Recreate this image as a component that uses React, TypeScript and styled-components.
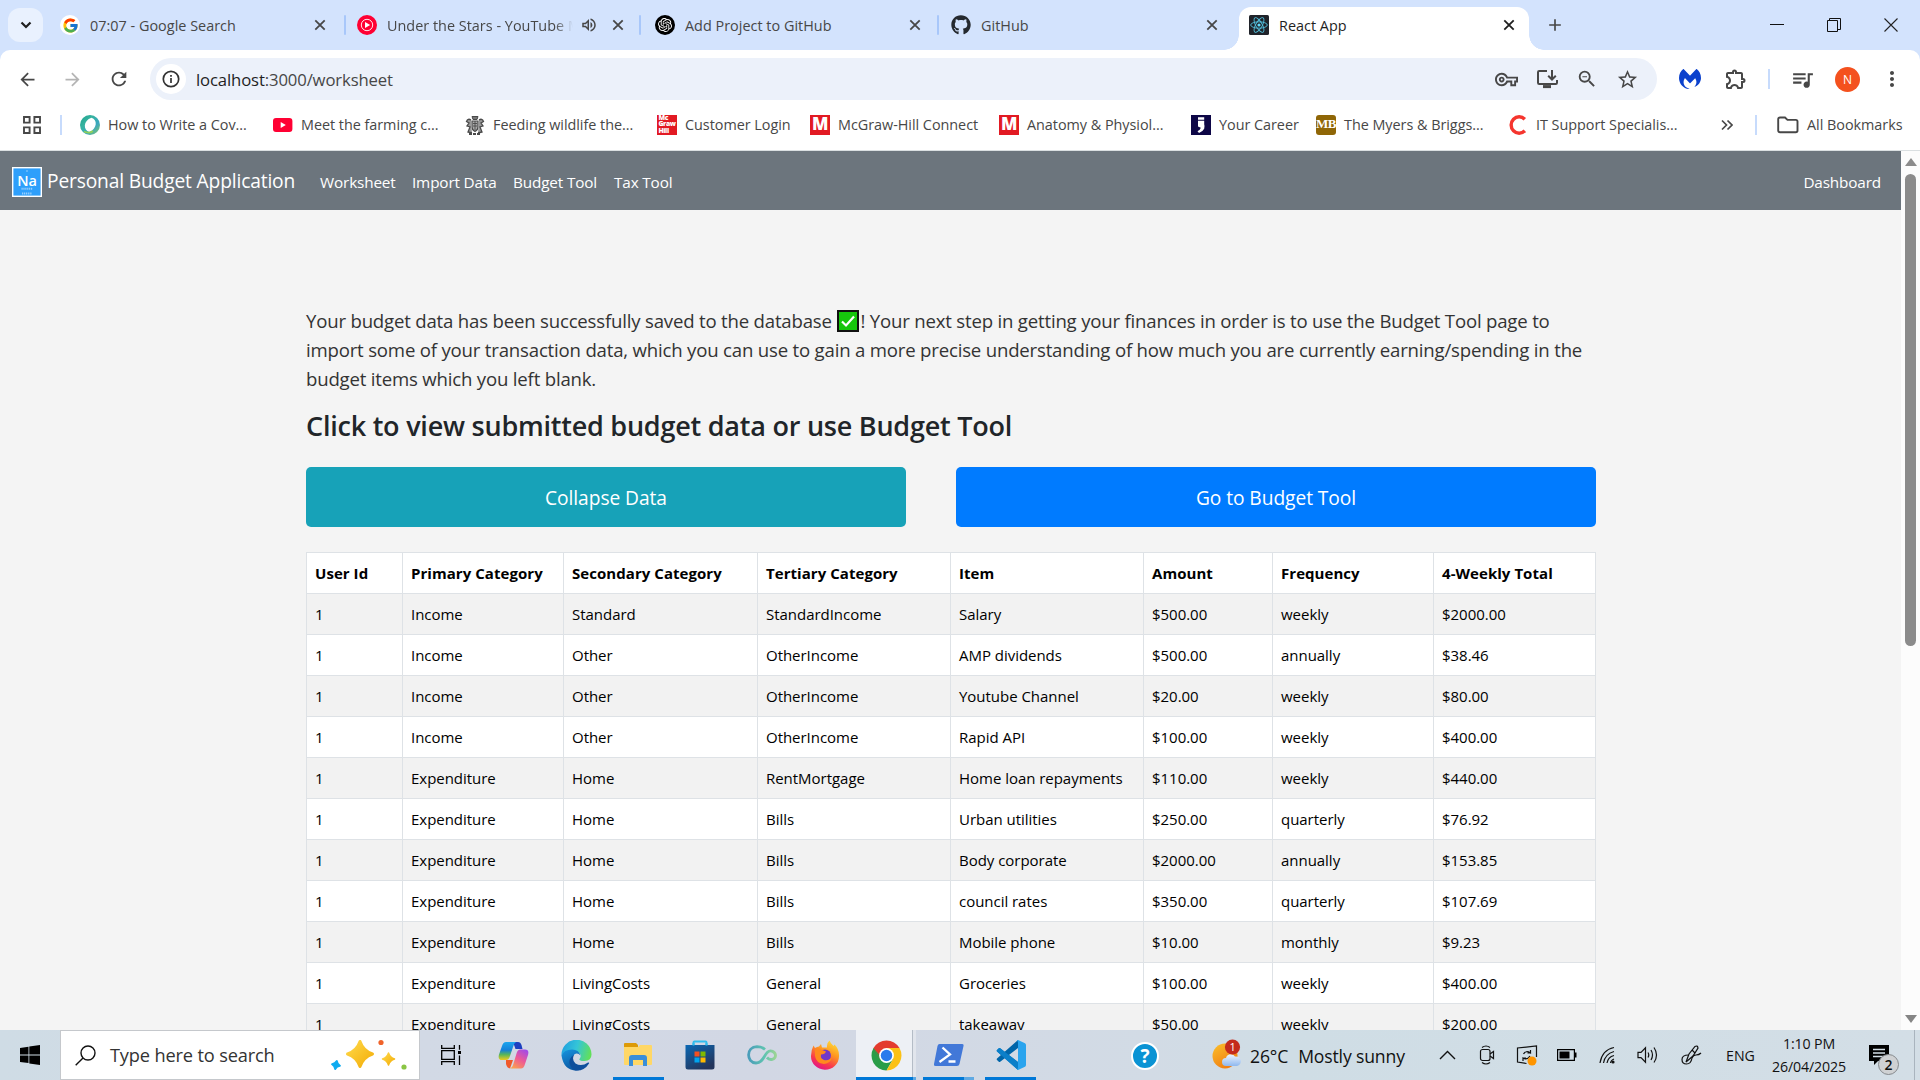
import React from "react";
import styled, { createGlobalStyle } from "styled-components";
import { FcGoogle } from "react-icons/fc";
import { FaGithub } from "react-icons/fa";
import { SiOpenai, SiMalwarebytes } from "react-icons/si";
import {
  MdAdd,
  MdArrowBack,
  MdArrowForward,
  MdRefresh,
  MdOutlineVolumeUp,
  MdOutlineVpnKey,
  MdStarOutline,
  MdZoomOut,
  MdOutlineExtension,
  MdQueueMusic,
  MdMoreVert,
} from "react-icons/md";

const Global = createGlobalStyle`
  *, *::before, *::after { box-sizing: border-box; }
  body {
    margin: 0;
    overflow: hidden;
    font-family: "Open Sans", "Noto Sans", sans-serif;
    color: #212529;
  }
  svg { display: block; flex: none; }
`;

const Screen = styled.div`
  display: flex;
  flex-direction: column;
  width: 1920px;
  height: 1080px;
  overflow: hidden;
  background: #fff;
`;

/* ---------- tab strip ---------- */

const TabStrip = styled.div`
  display: flex;
  flex: none;
  height: 50px;
  background: #d3e3fd;
  padding-left: 8px;
`;

const TabSearch = styled.div`
  display: flex;
  align-items: center;
  justify-content: center;
  flex: none;
  width: 35px;
  height: 34px;
  margin-top: 8px;
  border-radius: 12px;
  background: #e9f1fe;
`;

const Tab = styled.div<{ $width: number; $pad: number; $end?: number; $active?: boolean }>`
  position: relative;
  display: flex;
  align-items: center;
  flex: none;
  width: ${(p) => p.$width}px;
  padding-left: ${(p) => p.$pad}px;
  padding-right: ${(p) => p.$end ?? 16}px;
  height: ${(p) => (p.$active ? 43 : 50)}px;
  margin-top: ${(p) => (p.$active ? 7 : 0)}px;
  padding-bottom: ${(p) => (p.$active ? 7 : 0)}px;
  border-radius: ${(p) => (p.$active ? "12px 12px 0 0" : "0")};
  background: ${(p) => (p.$active ? "#fff" : "transparent")};
  color: ${(p) => (p.$active ? "#1f1f1f" : "#474747")};

  &::before,
  &::after {
    content: ${(p) => (p.$active ? '""' : "none")};
    position: absolute;
    bottom: 0;
    width: 15px;
    height: 15px;
  }
  &::before {
    left: -15px;
    background: radial-gradient(circle at 0 0, transparent 14.5px, #fff 15px);
  }
  &::after {
    right: -15px;
    background: radial-gradient(circle at 100% 0, transparent 14.5px, #fff 15px);
  }
`;

const TabTitle = styled.span<{ $fade?: boolean }>`
  flex: 1;
  min-width: 0;
  margin-left: 10px;
  padding-top: 1px;
  overflow: hidden;
  white-space: nowrap;
  font-size: 14.4px;
  line-height: 22px;
  letter-spacing: 0.02px;
  mask-image: ${(p) => (p.$fade ? "linear-gradient(90deg, #000 90%, transparent)" : "none")};
`;

const SoundMark = styled.span`
  margin: 0 14px 0 7px;
`;

const TabDivider = styled.span`
  flex: none;
  width: 2px;
  height: 20px;
  align-self: center;
  border-radius: 1px;
  background: #a8c7fa;
`;

const NewTab = styled.div`
  display: flex;
  align-items: center;
  padding-left: 16px;
  color: #474747;
`;

const WindowButtons = styled.div`
  display: flex;
  align-items: center;
  gap: 43px;
  margin-left: auto;
  padding-right: 22px;
  height: 49px;
`;

/* ---------- toolbar ---------- */

const ToolbarBack = styled.div`
  flex: none;
  background: #d3e3fd;
`;

const Toolbar = styled.div`
  display: flex;
  align-items: center;
  height: 58px;
  background: #fff;
  border-radius: 10px 10px 0 0;
  padding-left: 15px;
  color: #474747;
`;

const NavButton = styled.span<{ $width: number; $dim?: boolean }>`
  display: flex;
  justify-content: center;
  flex: none;
  width: ${(p) => p.$width}px;
  opacity: ${(p) => (p.$dim ? 0.4 : 1)};
`;

const Omnibox = styled.div`
  display: flex;
  align-items: center;
  flex: none;
  width: 1507px;
  height: 42px;
  margin-left: 17px;
  padding: 0 18px 0 6px;
  border-radius: 21px;
  background: #ecf1fa;
`;

const SiteInfo = styled.span`
  display: flex;
  align-items: center;
  justify-content: center;
  width: 30px;
  height: 30px;
  border-radius: 50%;
  background: #fff;
`;

const Url = styled.span`
  flex: 1;
  margin-left: 10px;
  font-size: 16.7px;
  letter-spacing: -0.13px;
  color: #474747;
  b {
    font-weight: 400;
    color: #1f1f1f;
  }
`;

const OmniActions = styled.span`
  display: flex;
  align-items: center;
  gap: 18px;
`;

const Extensions = styled.div`
  display: flex;
  align-items: center;
  gap: 20px;
  margin-left: 22px;
`;

const PuzzleSlot = styled.span`
  margin-left: 3px;
`;

const Divider = styled.span<{ $left?: number; $right?: number }>`
  flex: none;
  width: 2px;
  height: 20px;
  margin-left: ${(p) => p.$left ?? 0}px;
  margin-right: ${(p) => p.$right ?? 0}px;
  background: #c7dbfc;
`;

const Avatar = styled.span`
  display: flex;
  align-items: center;
  justify-content: center;
  width: 25px;
  height: 25px;
  border-radius: 50%;
  background: #f4511e;
  color: #fff;
  font-size: 12px;
`;

/* ---------- bookmarks ---------- */

const BookmarkBar = styled.div`
  display: flex;
  align-items: center;
  flex: none;
  height: 43px;
  padding: 0 18px 9px 23px;
  border-bottom: 1px solid #dadfe1;
  background: #fff;
  color: #474747;
  font-size: 14.4px;
  line-height: 20px;
  letter-spacing: -0.03px;
  white-space: nowrap;
`;

const Bookmark = styled.span<{ $width: number }>`
  display: flex;
  align-items: center;
  gap: 8px;
  flex: none;
  width: ${(p) => p.$width}px;
`;

const Tile = styled.span<{ $bg: string; $size: number; $round?: boolean; $font?: string }>`
  display: flex;
  align-items: center;
  justify-content: center;
  flex: none;
  width: 20px;
  height: 20px;
  border-radius: ${(p) => (p.$round ? 3 : 0)}px;
  background: ${(p) => p.$bg};
  color: #fff;
  font-family: ${(p) => p.$font ?? '"Open Sans", sans-serif'};
  font-size: ${(p) => p.$size}px;
  font-weight: 800;
  line-height: 6.4px;
  letter-spacing: -0.4px;
  white-space: pre;
`;

/* ---------- page ---------- */

const Viewport = styled.div`
  display: flex;
  height: 879px;
  flex: none;
  overflow: hidden;
`;

const Page = styled.main`
  width: 1901px;
  flex: none;
  overflow: hidden;
  background: #f4f4f4;
`;

const Navbar = styled.nav`
  display: flex;
  align-items: center;
  height: 59px;
  padding: 2px 20px 0 12px;
  background: #6c757d;
  color: #fff;
  font-size: 15.3px;
  letter-spacing: -0.15px;
  white-space: nowrap;
`;

const Brand = styled.span`
  width: 273px;
  margin-left: 5px;
  padding-bottom: 3px;
  font-size: 19.2px;
`;

const NavLink = styled.span<{ $width?: number }>`
  width: ${(p) => (p.$width ? `${p.$width}px` : "auto")};
  padding-top: 1px;
`;

const Spacer = styled.span`
  flex: 1;
`;

const Content = styled.section`
  width: 1290px;
  margin: 96px 0 0 306px;
`;

const Message = styled.p`
  margin: 0;
  color: #333;
  font-size: 18.6px;
  line-height: 29px;
  letter-spacing: -0.19px;
  white-space: nowrap;
`;

const Check = styled.svg`
  display: inline-block;
  vertical-align: -4px;
  margin: 0 1px;
`;

const Heading = styled.h3`
  margin: 15px 0 0;
  font-size: 27px;
  font-weight: 600;
  line-height: 36px;
  letter-spacing: -0.23px;
  white-space: nowrap;
`;

const Actions = styled.div`
  display: flex;
  justify-content: space-between;
  margin-top: 23px;
`;

const ActionButton = styled.button<{ $bg: string; $width: number }>`
  width: ${(p) => p.$width}px;
  height: 60px;
  padding: 0;
  border: 0;
  border-radius: 5px;
  background: ${(p) => p.$bg};
  color: #fff;
  font-family: inherit;
  font-size: 19.2px;
  letter-spacing: -0.06px;
`;

const DataTable = styled.table`
  width: 1289px;
  margin-top: 25px;
  table-layout: fixed;
  border-collapse: collapse;
  color: #000;
  background: #fff;
  font-size: 15px;
  letter-spacing: -0.03px;
  white-space: nowrap;

  th,
  td {
    height: 41px;
    padding: 0 0 0 8px;
    border: 1px solid #dee2e6;
    text-align: left;
  }
  th {
    letter-spacing: 0.05px;
  }
  tbody tr:nth-child(odd) {
    background: #f2f2f2;
  }
`;

const ScrollTrack = styled.div`
  display: flex;
  flex-direction: column;
  align-items: center;
  width: 19px;
  padding: 7px 0 7px;
  background: #fcfcfc;
`;

const ScrollThumb = styled.div`
  width: 11px;
  height: 472px;
  margin: 8px 0 auto;
  border-radius: 6px;
  background: #8b8b8b;
`;

/* ---------- taskbar ---------- */

const Taskbar = styled.footer`
  display: flex;
  flex: none;
  height: 50px;
  background: linear-gradient(90deg, #cfdce5 0, #d2d9e5 420px, #d2d7e4 760px, #d2dbe5 1150px, #cfdde5 1290px, #d3dee6 1920px);
  color: #111;
  white-space: nowrap;
`;

const Start = styled.div`
  display: flex;
  align-items: center;
  flex: none;
  width: 60px;
  padding-left: 20px;
`;

const SearchBox = styled.div`
  display: flex;
  align-items: center;
  flex: none;
  width: 360px;
  padding: 0 11px 0 14px;
  border: 1px solid #c5c8cc;
  background: #fff;
  color: #333;
  font-size: 18.2px;
  span {
    flex: 1;
    margin-left: 14px;
    letter-spacing: -0.15px;
  }
`;

const TaskItem = styled.div<{ $width: number; $line?: number; $tail?: number; $active?: boolean }>`
  display: flex;
  flex-direction: column;
  align-items: center;
  justify-content: center;
  flex: none;
  position: relative;
  width: ${(p) => p.$width}px;
  background: ${(p) =>
    p.$active ? "linear-gradient(90deg, #edf0f5 56px, #b4bcc6 56px, #b4bcc6 57px, #e1e5ec 57px)" : "transparent"};

  &::after {
    content: "";
    position: absolute;
    bottom: 0;
    width: ${(p) => p.$line ?? 0}px;
    height: 3px;
    background: linear-gradient(
      90deg,
      #0078d7 ${(p) => (p.$line ?? 0) - (p.$tail ?? 0)}px,
      #5fa9e3 ${(p) => (p.$line ?? 0) - (p.$tail ?? 0)}px
    );
  }
`;

const Help = styled.div`
  display: flex;
  align-items: center;
  justify-content: center;
  flex: none;
  width: 28px;
  height: 28px;
  margin: 12px 0 0 91px;
  border: 2.5px solid #fff;
  border-radius: 50%;
  background: #0a93d4;
  color: #fff;
  font-size: 19px;
  font-weight: 700;
`;

const Weather = styled.div`
  display: flex;
  align-items: center;
  flex: none;
  width: 216px;
  margin-left: 53px;
  font-size: 17.6px;
  letter-spacing: -0.15px;
  span {
    margin: 1px 10px 0 0;
  }
  svg {
    margin-right: 9px;
  }
`;

const Tray = styled.div`
  display: flex;
  align-items: center;
  flex: none;
`;

const TrayIcon = styled.span<{ $width: number }>`
  display: flex;
  justify-content: center;
  flex: none;
  width: ${(p) => p.$width}px;
`;

const Lang = styled.span`
  width: 44px;
  margin: 1px 0 0 11px;
  font-size: 14.2px;
`;

const Clock = styled.div`
  width: 78px;
  text-align: center;
  font-size: 14.2px;
  line-height: 23px;
  letter-spacing: -0.15px;
`;

const Notice = styled.div`
  position: relative;
  width: 46px;
  height: 50px;
  margin-left: 21px;
  border-right: 1px solid #a9b4be;
  svg {
    margin-top: 15px;
  }
`;

const NoticeCount = styled.span`
  position: absolute;
  left: 9px;
  top: 24px;
  display: flex;
  align-items: center;
  justify-content: center;
  width: 21px;
  height: 21px;
  border: 1px solid #85898d;
  border-radius: 50%;
  background: #cfd1d3;
  font-size: 14px;
  font-weight: 600;
`;

/* ---------- icons ---------- */

const CloseIcon = ({ color = "#474747" }: { color?: string }) => (
  <svg width="12" height="12" viewBox="0 0 12 12" stroke={color} strokeWidth="1.8">
    <path d="M1.3 1.3l9.4 9.4M10.7 1.3l-9.4 9.4" />
  </svg>
);

const YtMusicIcon = () => (
  <svg width="20" height="20" viewBox="0 0 20 20">
    <circle cx="10" cy="10" r="10" fill="#f03" />
    <circle cx="10" cy="10" r="5.7" fill="none" stroke="#fff" strokeWidth="0.9" />
    <path d="M8 6.9v6.2l5.2-3.1z" fill="#fff" />
  </svg>
);

const YoutubeIcon = () => (
  <svg width="20" height="20" viewBox="0 0 20 20">
    <rect x="0" y="3" width="19.4" height="14" rx="3" fill="#f03" />
    <path d="M7.7 7v6l5.1-3z" fill="#fff" />
  </svg>
);

const OpenAiFavicon = styled.span`
  display: flex;
  align-items: center;
  justify-content: center;
  flex: none;
  width: 20px;
  height: 20px;
  border-radius: 50%;
  background: #000;
  color: #fff;
`;

const GoogleFavicon = styled(OpenAiFavicon)`
  background: #fff;
`;

const ReactIcon = () => (
  <svg width="20" height="20" viewBox="0 0 20 20">
    <rect width="20" height="20" rx="1.5" fill="#20232a" />
    <g fill="none" stroke="#53c1de" strokeWidth="0.9">
      <ellipse cx="10" cy="10" rx="8.3" ry="3.2" />
      <ellipse cx="10" cy="10" rx="8.3" ry="3.2" transform="rotate(60 10 10)" />
      <ellipse cx="10" cy="10" rx="8.3" ry="3.2" transform="rotate(120 10 10)" />
    </g>
    <circle cx="10" cy="10" r="1.6" fill="#61dafb" />
  </svg>
);

const InfoIcon = () => (
  <svg width="18" height="18" viewBox="0 0 18 18" fill="none" stroke="#333">
    <circle cx="9" cy="9" r="7.7" strokeWidth="1.7" />
    <path d="M9 8v5M9 5v1.7" strokeWidth="1.7" />
  </svg>
);

const InstallIcon = () => (
  <svg width="22" height="20" viewBox="0 0 22 20" fill="none" stroke="#474747" strokeWidth="2">
    <path d="M11 2H3.2Q2 2 2 3.2v10.6Q2 15 3.2 15h16.6q1.2 0 1.2-1.2V11" />
    <path d="M16 1v9M12.2 6.8L16 10.5l3.8-3.7" />
    <path d="M7 17.6h8" strokeWidth="3" />
  </svg>
);

const GridIcon = () => (
  <svg width="18" height="18" viewBox="0 0 18 18" fill="none" stroke="#474747" strokeWidth="1.9">
    <path d="M1 1h5.6v5.6H1zM11.4 1H17v5.6h-5.6zM1 11.4h5.6V17H1zM11.4 11.4H17V17h-5.6z" />
  </svg>
);

const RingIcon = () => (
  <svg width="20" height="20" viewBox="0 0 20 20" fill="none">
    <defs>
      <linearGradient id="ring" x1="0" y1="0" x2="1" y2="1">
        <stop offset="0" stopColor="#1fa38d" />
        <stop offset="0.35" stopColor="#36b3a0" />
        <stop offset="0.65" stopColor="#3aa6c0" />
        <stop offset="1" stopColor="#8ecb5a" />
      </linearGradient>
    </defs>
    <path
      fillRule="evenodd"
      fill="url(#ring)"
      d="M10 0a10 10 0 1 0 0 20a10 10 0 1 0 0-20zM11.500 2.800C17.500 4.500 17.500 13.500 9.500 17C3 15.500 3 5.500 11.500 2.800z"
    />
    <path d="M4 16.500q5.500 2.500 9-.5" stroke="#8fd05a" strokeWidth="1.800" />
  </svg>
);

const CrestIcon = () => (
  <svg width="20" height="20" viewBox="0 0 20 20" fill="none" stroke="#4a4a4a">
    <path d="M7 1.500h6l-1 3H8z" fill="#777" />
    <path d="M7 6h6v6q0 3-3 4.500Q7 15 7 12z" fill="#aaa" strokeWidth="1.200" />
    <path d="M8 8.500h4M8 11h4M10 6v9" strokeWidth="0.900" />
    <path d="M6 5Q3 3 1.500 6.500L4 8 2 11l3 1-2 5 4 1M14 5q3-2 4.500 1.500L16 8l2 3-3 1 2 5-4 1" fill="#999" strokeWidth="1.300" />
    <path d="M4 19h12" strokeWidth="1.800" strokeDasharray="3 1" />
  </svg>
);

const CareerIcon = () => (
  <svg width="20" height="20" viewBox="0 0 20 20">
    <rect width="20" height="20" fill="#0d0646" />
    <path d="M7 2.200h6.200v2.600H7zM7 5.800h6.200v3.500q.8 2.200 0 4.500-1.500 3-5.200 4.200l-1.500-1.800q2.800-1.200 3.300-3.400L7 11.500z" fill="#fff" />
  </svg>
);

const CourseraIcon = () => (
  <svg width="20" height="20" viewBox="0 0 20 20" fill="none">
    <path d="M16.800 4.200A8 8.200 0 1 0 16.800 15.800" stroke="#f5352e" strokeWidth="3.400" />
  </svg>
);

const FolderIcon = () => (
  <svg width="22" height="18" viewBox="0 0 22 18" fill="none" stroke="#474747" strokeWidth="1.900">
    <path d="M1.200 3.200Q1.200 1.500 3 1.500h5l2.500 2.400h8.300q1.700 0 1.700 1.700v9q0 1.700-1.700 1.700H3q-1.800 0-1.800-1.700z" />
  </svg>
);

const AppLogo = () => (
  <svg width="30" height="30" viewBox="0 0 30 30" fontFamily='"Open Sans", sans-serif' textAnchor="middle" fill="#fff">
    <rect x="0.700" y="0.700" width="28.600" height="28.600" fill="#2e9ffb" stroke="#fff" strokeWidth="1.400" />
    <text x="15" y="19" fontSize="14.500" fontWeight="600">Na</text>
    <path d="M9.500 21.700h11M10 26.500h10M14.500 4h1" stroke="#fff" strokeWidth="2" strokeDasharray="1.200 0.700" opacity="0.500" />
  </svg>
);

const TaskViewIcon = () => (
  <svg width="20" height="20" viewBox="0 0 20 20" fill="none" stroke="#000" strokeWidth="1.300">
    <path d="M.7 0v3.300h12.600V0M.7 5.700h12.600v8.600H.7zM.7 20v-3.300h12.600V20" />
    <path d="M18.500 0v4.700M18.500 10.500V20" />
    <path d="M17 6h3v3h-3z" fill="#000" stroke="none" />
  </svg>
);

const sparkle = (x: number, y: number, r: number) => {
  const k = r * 0.25;
  return `M${x} ${y - r}Q${x + k} ${y - k} ${x + r} ${y}Q${x + k} ${y + k} ${x} ${y + r}Q${x - k} ${y + k} ${x - r} ${y}Q${x - k} ${y - k} ${x} ${y - r}Z`;
};

const SparkleIcon = () => (
  <svg width="78" height="34" viewBox="0 0 78 34" strokeLinejoin="round">
    <defs>
      <linearGradient id="gold" x1="0" y1="0" x2="1" y2="1">
        <stop offset="0" stopColor="#ffd94a" />
        <stop offset="1" stopColor="#f3ad08" />
      </linearGradient>
    </defs>
    <path d={sparkle(30, 16, 12.5)} fill="url(#gold)" stroke="url(#gold)" strokeWidth="3" />
    <path d={sparkle(58.5, 21, 6)} fill="url(#gold)" stroke="url(#gold)" strokeWidth="1.500" />
    <path d={sparkle(6, 27, 4)} fill="#0eabf0" stroke="#0eabf0" strokeWidth="2" transform="rotate(12 6 27)" />
    <circle cx="51" cy="4.500" r="2.600" fill="#f0632a" />
    <circle cx="74" cy="29" r="2.600" fill="#8ac544" />
  </svg>
);

const CopilotIcon = () => (
  <svg width="31" height="30" viewBox="0 0 31 30">
    <defs>
      <linearGradient id="cpA" x1="0" y1="0" x2="0" y2="1">
        <stop offset="0" stopColor="#1ba5ee" />
        <stop offset="0.450" stopColor="#1580d8" />
        <stop offset="0.700" stopColor="#58b65a" />
        <stop offset="1" stopColor="#eecb1c" />
      </linearGradient>
      <linearGradient id="cpB" x1="0.800" y1="0" x2="0.200" y2="1">
        <stop offset="0" stopColor="#a24ae8" />
        <stop offset="0.500" stopColor="#ee5a95" />
        <stop offset="1" stopColor="#fba14c" />
      </linearGradient>
    </defs>
    <path d="M15 2h5q2.500 0 3.500 3l1 4h-7z" fill="#1c3fc0" />
    <path d="M8 20h7l-3 8.500Q9 28 8 24z" fill="#f0592b" />
    <path d="M8 2h10q-2 1-3 5l-3 9q-1 4-4 4H4q-4.500 0-3-5.500L4 6q1.200-4 4-4z" fill="url(#cpA)" />
    <path d="M23 28.500H12q2.500-1 3.500-5l3-10q1-4 4-4H27q4.500 0 3 5.500L27 24q-1.200 4.500-4 4.500z" fill="url(#cpB)" />
  </svg>
);

const EdgeIcon = () => (
  <svg width="31" height="31" viewBox="0 0 31 31">
    <defs>
      <linearGradient id="edA" x1="0" y1="0.300" x2="1" y2="0.500">
        <stop offset="0" stopColor="#1f9fe0" />
        <stop offset="0.500" stopColor="#34c5d8" />
        <stop offset="1" stopColor="#62e05a" />
      </linearGradient>
      <linearGradient id="edB" x1="0" y1="0" x2="0.400" y2="1">
        <stop offset="0" stopColor="#1795e0" />
        <stop offset="1" stopColor="#0c59a4" />
      </linearGradient>
    </defs>
    <path d="M.5 15.500A15 15 0 0 1 30.500 14q.3 6.500-7 7-5 .2-5.200-1.800 2.700-3 .2-6.200Q10 7 .5 15.500z" fill="url(#edA)" />
    <path d="M.5 15.500Q3 9.500 11 9.500q7 .2 8.500 6-3-3.500-6.300-1Q9 20 14 25q3 3 4 5.300Q3 32 .5 15.500z" fill="url(#edB)" />
    <path d="M13 14.800Q10.500 20 14.500 23.500q6 3.500 12.500-1 1.500-.5 1 1-5 8-14 7-7.500-5-5-11.500 1.500-3 4-4.200z" fill="#0f4f9c" />
  </svg>
);

const ExplorerIcon = () => (
  <svg width="28" height="24" viewBox="0 0 28 24">
    <path d="M0 1q0-1 1-1h11l2 2v6H0z" fill="#dd9a07" />
    <path d="M0 4h14l2-2h11q1 0 1 1v18q0 1-1 1H1q-1 0-1-1z" fill="#ffd766" />
    <path d="M5 23v-8q0-3 3-3h12q3 0 3 3v8h-4v-6H9v6z" fill="#3a8ed8" />
  </svg>
);

const StoreIcon = () => (
  <svg width="30" height="30" viewBox="0 0 30 30">
    <defs>
      <linearGradient id="store" x1="0" y1="0" x2="0.600" y2="1">
        <stop offset="0" stopColor="#0b68b4" />
        <stop offset="1" stopColor="#24355c" />
      </linearGradient>
    </defs>
    <path d="M8.500 7V2.500q0-1 1-1h11q1 0 1 1V7" fill="none" stroke="#31bdee" strokeWidth="2" />
    <path d="M.5 5h29v22q0 2.500-2.500 2.500H3Q.5 29.500.5 27z" fill="url(#store)" />
    <path d="M8.500 5.500V3M21.500 5.500V3" stroke="#31bdee" strokeWidth="2" />
    <path d="M9.500 11.500h5v5h-5z" fill="#f25022" />
    <path d="M15.500 11.500h5v5h-5z" fill="#7fba00" />
    <path d="M9.500 17.500h5v5h-5z" fill="#00a4ef" />
    <path d="M15.500 17.500h5v5h-5z" fill="#ffb900" />
  </svg>
);

const LoopIcon = () => (
  <svg width="30" height="20" viewBox="0 0 30 20" fill="none">
    <defs>
      <linearGradient id="loop" x1="0" y1="0" x2="1" y2="0">
        <stop offset="0" stopColor="#4a9dba" />
        <stop offset="0.600" stopColor="#5fc4b0" />
        <stop offset="1" stopColor="#9bd494" />
      </linearGradient>
    </defs>
    <path
      d="M18 4.500Q15 1.700 10 1.700C-1 2-1 17.500 9 18c7 0 7.500-7 11.500-10.800 3-2.700 8 -.7 8 3.300s-5.500 5.500-8.500 2"
      stroke="url(#loop)"
      strokeWidth="2.800"
    />
  </svg>
);

const FirefoxIcon = () => (
  <svg width="30" height="30" viewBox="0 0 30 30">
    <defs>
      <linearGradient id="fox" x1="0.800" y1="0" x2="0.300" y2="1">
        <stop offset="0" stopColor="#ffe03a" />
        <stop offset="0.400" stopColor="#ff9720" />
        <stop offset="0.750" stopColor="#f8384e" />
        <stop offset="1" stopColor="#e0128c" />
      </linearGradient>
    </defs>
    <path d="M19.500.5q1 3 4 5.500l1-1.500q5 5 4.500 12A14 13.500 0 0 1 1 16Q1 10 3.500 5.500L5 8q2-1.500 4-1.500L11 4l1 3.500h5Q16.500 3 19.500.5z" fill="url(#fox)" />
    <circle cx="15" cy="15.500" r="6" fill="#7139c9" />
    <path d="M5 9.500q4-2 7 .5l4 1.500q-1 3-5 3-1 4 3 5.500 5 1 8-3-1 6-8 7-8-1-9-8z" fill="#ff8a1e" />
  </svg>
);

const ChromeIcon = () => (
  <svg width="31" height="31" viewBox="-15.500 -15.500 31 31">
    <path d="M-12.990-7.500A15 15 0 0 1 12.990-7.500L0 0z" fill="#e33b2e" />
    <path d="M-12.990-7.500A15 15 0 0 0 0 15L6.500 3.700 0 0z" fill="#2a9d48" />
    <path d="M12.990-7.500A15 15 0 0 1 0 15L6.500 3.700 0-7.500z" fill="#fbc116" />
    <path d="M-12.990-7.500L-6.500 3.700 0 0V-7.500z" fill="#e33b2e" />
    <path d="M-12.990-7.500L-6.500 3.700 0 8z" fill="#2a9d48" />
    <circle r="7.400" fill="#fff" />
    <circle r="5.700" fill="#2a7bec" />
  </svg>
);

const PowerShellIcon = () => (
  <svg width="30" height="22" viewBox="0 0 30 22">
    <path d="M5.500 0H28q2 0 1.500 2L25.500 20q-.5 2-2.500 2H1.500Q-.5 22 0 20L3.500 2Q4 0 5.500 0z" fill="#4278d8" />
    <path d="M8.500 3.500l7.500 7-10.500 7.500M14.500 17.500h7" fill="none" stroke="#fff" strokeWidth="2.300" />
  </svg>
);

const VsCodeIcon = () => (
  <svg width="30" height="30" viewBox="0 0 30 30">
    <path d="M22 22L1 11.500q-.8-.8 0-1.500l1.800-1.700q.7-.5 1.400 0L22 22v8L1 11.500" fill="#0b7fc9" />
    <path d="M22 0L1 18.500q-.8.800 0 1.500l1.800 1.700q.7.500 1.400 0L22 8z" fill="#0065a9" />
    <path d="M22 30L1 11.500q-.8-.8 0-1.500l1.800-1.700q.7-.5 1.400 0L22 22z" fill="#0b7fc9" />
    <path d="M21 0.500L22 0l7 3.300q1 .5 1 2v19.400q0 1.500-1 2L22 30l-1-.5 1-1.500V2z" fill="#2aa4ee" />
  </svg>
);

const WeatherIcon = () => (
  <svg width="29" height="34" viewBox="0 0 29 34">
    <defs>
      <linearGradient id="sun" x1="0" y1="0" x2="0.600" y2="1">
        <stop offset="0" stopColor="#fbc02a" />
        <stop offset="1" stopColor="#f07d13" />
      </linearGradient>
      <linearGradient id="cloud" x1="0" y1="0" x2="0" y2="1">
        <stop offset="0" stopColor="#eef5ff" />
        <stop offset="1" stopColor="#8fb8ee" />
      </linearGradient>
    </defs>
    <circle cx="13" cy="18" r="12.500" fill="url(#sun)" />
    <path d="M14 28a4 4 0 0 1 0-8 5 5 0 0 1 9-1.500 4.500 4.500 0 0 1 2 9.500z" fill="url(#cloud)" />
    <circle cx="20.500" cy="9" r="7.600" fill="#c42b1c" />
    <text x="20.500" y="13" fontSize="11" fill="#fff" textAnchor="middle" fontFamily='"Open Sans", sans-serif'>1</text>
  </svg>
);

const CamIcon = () => (
  <svg width="16" height="20" viewBox="0 0 16 20" fill="none" stroke="#111" strokeWidth="1.200">
    <rect x="1.500" y="4.500" width="9.500" height="11" rx="2" />
    <path d="M11 9l3.500-2.500v7L11 11M3 2.500Q7-.5 11 2.500M3 17.500q4 3 8 0" />
  </svg>
);

const SyncIcon = () => (
  <svg width="22" height="21" viewBox="0 0 22 21" fill="none" stroke="#111" strokeWidth="1.200">
    <path d="M20.500 12V1L1.500 3v14l9 1.500" />
    <path d="M7.500 9Q10 5 14.500 8V5M14 11q-3 4.500-7 2v3M14.500 8h-3M7 13h3" />
    <circle cx="16" cy="16" r="4.500" fill="#ff9500" stroke="none" />
  </svg>
);

const BatteryIcon = () => (
  <svg width="20" height="12" viewBox="0 0 20 12" fill="none" stroke="#000" strokeWidth="1.200">
    <path d="M.6.6h16.800v10.800H.6z" />
    <path d="M2.500 2.500h10v7h-10z" fill="#000" stroke="none" />
    <path d="M18.500 3.500v5" strokeWidth="2" />
  </svg>
);

const WifiIcon = () => (
  <svg width="16" height="18" viewBox="0 0 16 18" fill="none" stroke="#111" strokeWidth="1.200">
    <path d="M1 17Q3 4 15 1.500M4.500 17Q6 8 15 5.500M8 17Q9 11 15 9.500M11.500 17q.5-3 3.500-4" />
    <circle cx="14" cy="16" r="1.600" fill="#111" stroke="none" />
  </svg>
);

const SpeakerIcon = () => (
  <svg width="21" height="18" viewBox="0 0 21 18" fill="none" stroke="#111" strokeWidth="1.200">
    <path d="M1 6.300h3l4.500-4.500v14.400L4 11.700H1z" />
    <path d="M11 6.500q1.500 2.500 0 5M14 4q3 5 0 10M17 1.500q5 7.500 0 15" />
  </svg>
);

const PenIcon = () => (
  <svg width="21" height="20" viewBox="0 0 21 20" fill="none" stroke="#111" strokeWidth="1.200">
    <path d="M5 17L8 9 14 1.500q2.500-1.500 3 1.500L12 11z" />
    <path d="M7.500 10Q1 10 1 14.500T5.500 19Q10 19 11 13q1-3 4-3t5-2M11 5l3 3" />
  </svg>
);

/* ---------- data ---------- */

const columns: [string, number][] = [
  ["User Id", 96],
  ["Primary Category", 161],
  ["Secondary Category", 194],
  ["Tertiary Category", 193],
  ["Item", 193],
  ["Amount", 129],
  ["Frequency", 161],
  ["4-Weekly Total", 162],
];

const rows = [
  ["1", "Income", "Standard", "StandardIncome", "Salary", "$500.00", "weekly", "$2000.00"],
  ["1", "Income", "Other", "OtherIncome", "AMP dividends", "$500.00", "annually", "$38.46"],
  ["1", "Income", "Other", "OtherIncome", "Youtube Channel", "$20.00", "weekly", "$80.00"],
  ["1", "Income", "Other", "OtherIncome", "Rapid API", "$100.00", "weekly", "$400.00"],
  ["1", "Expenditure", "Home", "RentMortgage", "Home loan repayments", "$110.00", "weekly", "$440.00"],
  ["1", "Expenditure", "Home", "Bills", "Urban utilities", "$250.00", "quarterly", "$76.92"],
  ["1", "Expenditure", "Home", "Bills", "Body corporate", "$2000.00", "annually", "$153.85"],
  ["1", "Expenditure", "Home", "Bills", "council rates", "$350.00", "quarterly", "$107.69"],
  ["1", "Expenditure", "Home", "Bills", "Mobile phone", "$10.00", "monthly", "$9.23"],
  ["1", "Expenditure", "LivingCosts", "General", "Groceries", "$100.00", "weekly", "$400.00"],
  ["1", "Expenditure", "LivingCosts", "General", "takeaway", "$50.00", "weekly", "$200.00"],
];

const bookmarks: { label: string; width: number; icon: React.ReactNode }[] = [
  { label: "How to Write a Cov...", width: 193, icon: <RingIcon /> },
  { label: "Meet the farming c...", width: 192, icon: <YoutubeIcon /> },
  { label: "Feeding wildlife the...", width: 192, icon: <CrestIcon /> },
  { label: "Customer Login", width: 153, icon: <Tile $bg="#e21a23" $size={6.8}>{"Mc\nGraw\nHill"}</Tile> },
  { label: "McGraw-Hill Connect", width: 189, icon: <Tile $bg="#e21a23" $size={17}>M</Tile> },
  { label: "Anatomy & Physiol...", width: 192, icon: <Tile $bg="#e21a23" $size={17}>M</Tile> },
  { label: "Your Career", width: 125, icon: <CareerIcon /> },
  { label: "The Myers & Briggs...", width: 192, icon: <Tile $bg="#8f6606" $size={13} $round $font='"Liberation Serif", serif'>MB</Tile> },
  { label: "IT Support Specialis...", width: 213, icon: <CourseraIcon /> },
];

/* ---------- screen ---------- */

export default function App() {
  return (
    <Screen>
      <Global />
      <TabStrip>
        <TabSearch>
          <svg width="12" height="8" fill="none" stroke="#1f1f1f" strokeWidth="2.200">
            <path d="M1.500 1.500L6 6l4.500-4.500" />
          </svg>
        </TabSearch>
        <Tab $width={301} $pad={17} $end={18}>
          <GoogleFavicon><FcGoogle size={17} /></GoogleFavicon>
          <TabTitle>07:07 - Google Search</TabTitle>
          <CloseIcon />
        </Tab>
        <TabDivider />
        <Tab $width={293} $pad={11} $end={15}>
          <YtMusicIcon />
          <TabTitle $fade>Under the Stars - YouTube Music</TabTitle>
          <SoundMark><MdOutlineVolumeUp size={18} /></SoundMark>
          <CloseIcon />
        </Tab>
        <TabDivider />
        <Tab $width={296} $pad={14}>
          <OpenAiFavicon><SiOpenai size={14} /></OpenAiFavicon>
          <TabTitle>Add Project to GitHub</TabTitle>
          <CloseIcon />
        </Tab>
        <TabDivider />
        <Tab $width={300} $pad={12} $end={21}>
          <FaGithub size={20} color="#24292f" />
          <TabTitle>GitHub</TabTitle>
          <CloseIcon />
        </Tab>
        <Tab $width={290} $pad={10} $end={14} $active>
          <ReactIcon />
          <TabTitle>React App</TabTitle>
          <CloseIcon color="#1f1f1f" />
        </Tab>
        <NewTab>
          <MdAdd size={20} />
        </NewTab>
        <WindowButtons>
          <svg width="14" height="14" stroke="#111"><path d="M0 6.500h14" /></svg>
          <svg width="14" height="14" fill="none" stroke="#111">
            <path d="M.5 2.500h10v11H.5zM2.500 2.500v-2h11v11h-3" />
          </svg>
          <svg width="14" height="14" stroke="#222" strokeWidth="1.100"><path d="M.5.500l13 13M13.500.500l-13 13" /></svg>
        </WindowButtons>
      </TabStrip>

      <ToolbarBack>
        <Toolbar>
          <NavButton $width={25}><MdArrowBack size={21} /></NavButton>
          <NavButton $width={64} $dim><MdArrowForward size={21} /></NavButton>
          <NavButton $width={29}><MdRefresh size={22} /></NavButton>
          <Omnibox>
            <SiteInfo><InfoIcon /></SiteInfo>
            <Url><b>localhost</b>:3000/worksheet</Url>
            <OmniActions>
              <MdOutlineVpnKey size={23} />
              <InstallIcon />
              <MdZoomOut size={22} />
              <MdStarOutline size={23} />
            </OmniActions>
          </Omnibox>
          <Extensions>
            <SiMalwarebytes size={22} color="#0b41cd" />
            <PuzzleSlot><MdOutlineExtension size={24} /></PuzzleSlot>
            <Divider />
            <MdQueueMusic size={25} />
            <Avatar>N</Avatar>
            <MdMoreVert size={24} />
          </Extensions>
        </Toolbar>
      </ToolbarBack>

      <BookmarkBar>
        <GridIcon />
        <Divider $left={19} $right={18} />
        {bookmarks.map((b) => (
          <Bookmark key={b.label} $width={b.width}>
            {b.icon}
            {b.label}
          </Bookmark>
        ))}
        <svg width="12" height="12" fill="none" stroke="#474747" strokeWidth="1.700">
          <path d="M1 1.500L5.500 6 1 10.500M6.500 1.500L11 6l-4.500 4.500" />
        </svg>
        <Divider $left={22} $right={20} />
        <Bookmark $width={126}>
          <FolderIcon />
          All Bookmarks
        </Bookmark>
      </BookmarkBar>

      <Viewport>
        <Page>
          <Navbar>
            <AppLogo />
            <Brand>Personal Budget Application</Brand>
            <NavLink $width={92}>Worksheet</NavLink>
            <NavLink $width={101}>Import Data</NavLink>
            <NavLink $width={101}>Budget Tool</NavLink>
            <NavLink>Tax Tool</NavLink>
            <Spacer />
            <NavLink>Dashboard</NavLink>
          </Navbar>
          <Content>
            <Message>
              Your budget data has been successfully saved to the database{" "}
              <Check width="22" height="22" viewBox="0 0 22 22">
                <rect x="1" y="1" width="20" height="20" fill="#16c60c" stroke="#111" strokeWidth="2" />
                <path d="M5 11.500l4 4 8-9" fill="none" stroke="#fff" strokeWidth="2.200" />
              </Check>
              ! Your next step in getting your finances in order is to use the Budget Tool page to
              <br />
              import some of your transaction data, which you can use to gain a more precise understanding of how much you
              are currently earning/spending in the
              <br />
              budget items which you left blank.
            </Message>
            <Heading>Click to view submitted budget data or use Budget Tool</Heading>
            <Actions>
              <ActionButton $bg="#17a2b8" $width={600}>Collapse Data</ActionButton>
              <ActionButton $bg="#007bff" $width={640}>Go to Budget Tool</ActionButton>
            </Actions>
            <DataTable>
              <colgroup>
                {columns.map(([name, width]) => (
                  <col key={name} width={width} />
                ))}
              </colgroup>
              <thead>
                <tr>
                  {columns.map(([name]) => (
                    <th key={name}>{name}</th>
                  ))}
                </tr>
              </thead>
              <tbody>
                {rows.map((row, r) => (
                  <tr key={r}>
                    {row.map((cell, c) => (
                      <td key={c}>{cell}</td>
                    ))}
                  </tr>
                ))}
              </tbody>
            </DataTable>
          </Content>
        </Page>
        <ScrollTrack>
          <svg width="12" height="8"><path d="M6 0l6 8H0z" fill="#8b8b8b" /></svg>
          <ScrollThumb />
          <svg width="12" height="8"><path d="M0 0h12L6 8z" fill="#858585" /></svg>
        </ScrollTrack>
      </Viewport>

      <Taskbar>
        <Start>
          <svg width="20" height="20" viewBox="0 0 20 20">
            <path d="M0 3l8.500-1.200v7.700H0zM9.300 1.600L20 0v9.500H9.300zM0 10.400h8.500v7.700L0 17zM9.300 10.400H20V20L9.300 18.400z" />
          </svg>
        </Start>
        <SearchBox>
          <svg width="21" height="21" viewBox="0 0 21 21" fill="none" stroke="#111" strokeWidth="1.400">
            <circle cx="13" cy="8" r="7" />
            <path d="M8 13L.7 20.300" />
          </svg>
          <span>Type here to search</span>
          <SparkleIcon />
        </SearchBox>
        <TaskItem $width={61}><TaskViewIcon /></TaskItem>
        <TaskItem $width={65}><CopilotIcon /></TaskItem>
        <TaskItem $width={61}><EdgeIcon /></TaskItem>
        <TaskItem $width={62} $line={51}><ExplorerIcon /></TaskItem>
        <TaskItem $width={62}><StoreIcon /></TaskItem>
        <TaskItem $width={62}><LoopIcon /></TaskItem>
        <TaskItem $width={63}><FirefoxIcon /></TaskItem>
        <TaskItem $width={60} $line={60} $tail={3} $active><ChromeIcon /></TaskItem>
        <TaskItem $width={65} $line={51} $tail={10}><PowerShellIcon /></TaskItem>
        <TaskItem $width={59} $line={51}><VsCodeIcon /></TaskItem>
        <Help>?</Help>
        <Weather>
          <WeatherIcon />
          <span>26°C</span>
          <span>Mostly sunny</span>
        </Weather>
        <Tray>
          <TrayIcon $width={38}>
            <svg width="17" height="10" fill="none" stroke="#111" strokeWidth="1.400"><path d="M1 9l7.500-7.500L16 9" /></svg>
          </TrayIcon>
          <TrayIcon $width={42}><CamIcon /></TrayIcon>
          <TrayIcon $width={38}><SyncIcon /></TrayIcon>
          <TrayIcon $width={41}><BatteryIcon /></TrayIcon>
          <TrayIcon $width={40}><WifiIcon /></TrayIcon>
          <TrayIcon $width={40}><SpeakerIcon /></TrayIcon>
          <TrayIcon $width={48}><PenIcon /></TrayIcon>
          <Lang>ENG</Lang>
          <Clock>
            1:10 PM
            <br />
            26/04/2025
          </Clock>
          <Notice>
            <svg width="20" height="21" viewBox="0 0 20 21">
              <path d="M0 0h20v16H9l-4 4v-4H0z" />
              <path d="M4 4.500h12M4 8h12M4 11.500h12" stroke="#d3dee6" strokeWidth="1.300" />
            </svg>
            <NoticeCount>2</NoticeCount>
          </Notice>
        </Tray>
      </Taskbar>
    </Screen>
  );
}
